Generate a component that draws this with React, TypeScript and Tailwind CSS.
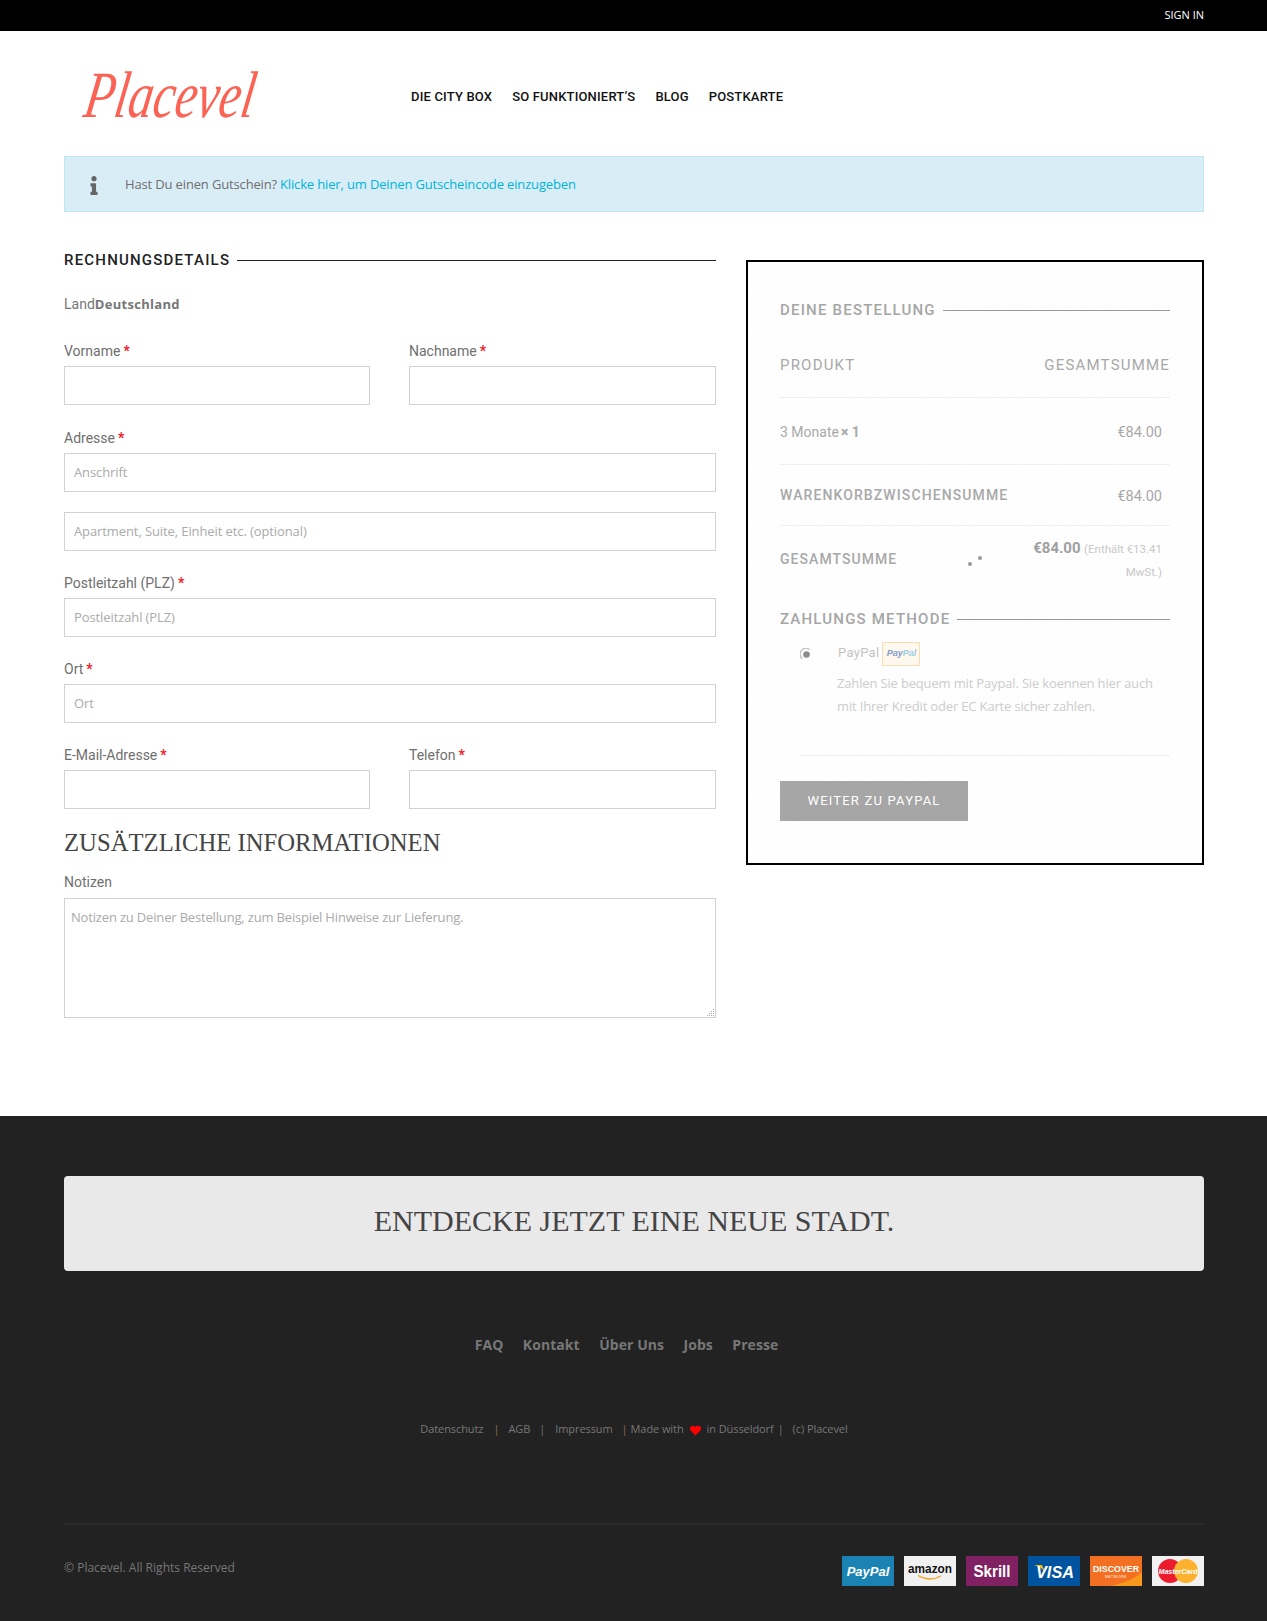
import React from "react";
import { FaInfo, FaHeart } from "react-icons/fa";

const Star = () => <span className="text-[#f0182a] font-bold ml-[3px]">*</span>;

function Label({ text, req = true, cls = "" }: { text: string; req?: boolean; cls?: string }) {
  return (
    <div className={`h-5 pt-px leading-5 text-[14px] text-[#6f6f6f] font-['Roboto',sans-serif] ${cls}`}>
      {text}
      {req && <Star />}
    </div>
  );
}

function Input({ ph = "", cls = "" }: { ph?: string; cls?: string }) {
  return (
    <input
      placeholder={ph}
      className={`block w-full h-[39px] border border-[#d2d2d2] bg-white px-[9px] pb-px text-[13px] tracking-[-0.1px] font-['Open_Sans',sans-serif] placeholder:text-[#aaa] outline-none ${cls}`}
    />
  );
}

function LineHeading({ text, dark = false, cls = "" }: { text: string; dark?: boolean; cls?: string }) {
  return (
    <div className={`flex items-center h-5 gap-[7px] ${cls}`}>
      <span
        className={`font-['Roboto',sans-serif] font-medium text-[15px] tracking-[1.2px] uppercase whitespace-nowrap ${dark ? "text-[#222]" : "text-[#a6a6a6]"}`}
      >
        {text}
      </span>
      <span className={`flex-1 h-px ${dark ? "bg-[#222]" : "bg-[#999]"}`} />
    </div>
  );
}

function Cards() {
  const base = "w-[52px] h-[30px] block";
  return (
    <div className="flex gap-[10px]">
      <svg viewBox="0 0 52 30" className={base}>
        <rect width="52" height="30" fill="#1a83b4" />
        <text x="26" y="20" textAnchor="middle" fontFamily="Liberation Sans" fontWeight="700" fontStyle="italic" fontSize="13" fill="#fff">PayPal</text>
      </svg>
      <svg viewBox="0 0 52 30" className={base}>
        <rect width="52" height="30" fill="#f1f1f1" />
        <text x="26" y="17" textAnchor="middle" fontFamily="Liberation Sans" fontWeight="700" fontSize="12" fill="#111" textLength="44" lengthAdjust="spacingAndGlyphs">amazon</text>
        <path d="M14 19.5c7 4.5 16 4.5 23 .5" fill="none" stroke="#f5a623" strokeWidth="1.4" />
      </svg>
      <svg viewBox="0 0 52 30" className={base}>
        <rect width="52" height="30" fill="#7f2163" />
        <text x="26" y="21" textAnchor="middle" fontFamily="Liberation Sans" fontWeight="700" fontSize="17" fill="#fff" textLength="37" lengthAdjust="spacingAndGlyphs">Skrill</text>
      </svg>
      <svg viewBox="0 0 52 30" className={base}>
        <rect width="52" height="30" fill="#00539f" />
        <path d="M6 9h8l3 7C14 12 10 10 6 9z" fill="#f7b600" />
        <text x="27" y="21.5" textAnchor="middle" fontFamily="Liberation Sans" fontWeight="700" fontStyle="italic" fontSize="17" fill="#fff" textLength="38" lengthAdjust="spacingAndGlyphs">VISA</text>
      </svg>
      <svg viewBox="0 0 52 30" className={base}>
        <rect width="52" height="30" fill="#f36f21" />
        <path d="M52 16C44 24 30 28 20 30h32z" fill="#f8981d" />
        <text x="26" y="16" textAnchor="middle" fontFamily="Liberation Sans" fontWeight="700" fontSize="9.5" fill="#fff" textLength="46" lengthAdjust="spacingAndGlyphs">DISCOVER</text>
        <text x="26" y="22" textAnchor="middle" fontFamily="Liberation Sans" fontSize="3.6" fill="#fff" letterSpacing="0.5">NETWORK</text>
      </svg>
      <svg viewBox="0 0 52 30" className={base}>
        <rect width="52" height="30" fill="#f1f1f1" />
        <circle cx="18" cy="15" r="12" fill="#ec1c2e" />
        <circle cx="34" cy="15" r="12" fill="#fdb22f" />
        <text x="26" y="18" textAnchor="middle" fontFamily="Liberation Sans" fontWeight="700" fontStyle="italic" fontSize="7.5" fill="#fff" textLength="39" lengthAdjust="spacingAndGlyphs">MasterCard</text>
      </svg>
    </div>
  );
}

export default function App() {
  return (
    <div className="w-[1267px] min-h-[1621px] bg-white font-['Open_Sans',sans-serif] overflow-hidden">
      <div className="h-[31px] bg-black flex items-center justify-end pr-[63px]">
        <a className="text-white text-[11px] uppercase font-['Open_Sans',sans-serif]">Sign in</a>
      </div>

      <div className="pl-[64px] pr-[63px]">
        <header className="h-[125px] flex items-start">
          <svg width="240" height="72" viewBox="0 0 240 72" className="block ml-[16px] mt-[30px] shrink-0">
            <g transform="skewX(-9) translate(10 0)">
              <text
                x="1"
                y="56"
                fontFamily="Liberation Serif"
                fontStyle="italic"
                fontSize="66"
                fill="#fb6455"
                textLength="170"
                lengthAdjust="spacingAndGlyphs"
              >
                Placevel
              </text>
            </g>
          </svg>
          <nav className="ml-[91px] mt-[56px] h-5 flex items-center gap-[20px] text-[13px] tracking-[0.17px] leading-5 font-medium text-[#111] uppercase font-['Roboto',sans-serif] whitespace-nowrap">
            <a>Die City Box</a>
            <a>So funktioniert’s</a>
            <a>Blog</a>
            <a>Postkarte</a>
          </nav>
        </header>

        <div className="h-[56px] bg-[#d9edf7] border border-[#bce8f1] flex items-center pl-[24px] text-[13px] tracking-[-0.15px]">
          <FaInfo className="text-[#666] w-[10px] h-[19px] mt-[2px]" />
          <span className="ml-[26px] mt-px text-[#6f6f6f]">Hast Du einen Gutschein?</span>
          <a className="ml-[3px] mt-px text-[#00b4d8]">Klicke hier, um Deinen Gutscheincode einzugeben</a>
        </div>

        <main className="flex items-start gap-[30px] mt-[36px] mb-[98px]">
          <section className="w-[652px]">
            <div className="h-6 flex items-center">
              <LineHeading text="Rechnungsdetails" dark cls="w-full" />
            </div>
            <div className="mt-[22px] h-5 leading-5 text-[14px] text-[#777] font-['Roboto',sans-serif]">
              Land<strong className="font-['Open_Sans',sans-serif] font-bold text-[13px] tracking-[0.3px]">Deutschland</strong>
            </div>

            <div className="mt-[26px] grid grid-cols-[306px_307px] gap-x-[39px]">
              <div>
                <Label text="Vorname" />
                <Input cls="mt-[6px]" />
              </div>
              <div>
                <Label text="Nachname" />
                <Input cls="mt-[6px]" />
              </div>
            </div>

            <Label text="Adresse" cls="mt-[22px]" />
            <Input ph="Anschrift" cls="mt-[6px]" />
            <Input ph="Apartment, Suite, Einheit etc. (optional)" cls="mt-[20px]" />

            <Label text="Postleitzahl (PLZ)" cls="mt-[21px]" />
            <Input ph="Postleitzahl (PLZ)" cls="mt-[6px]" />

            <Label text="Ort" cls="mt-[21px]" />
            <Input ph="Ort" cls="mt-[6px]" />

            <div className="mt-[21px] grid grid-cols-[306px_307px] gap-x-[39px]">
              <div>
                <Label text="E-Mail-Adresse" />
                <Input cls="mt-[6px]" />
              </div>
              <div>
                <Label text="Telefon" />
                <Input cls="mt-[6px]" />
              </div>
            </div>

            <h3 className="mt-[16px] h-[36px] leading-[36px] text-[24.7px] text-[#444] uppercase font-['Liberation_Serif',serif] font-normal whitespace-nowrap">
              Zusätzliche Informationen
            </h3>
            <Label text="Notizen" req={false} cls="mt-[10px]" />
            <div className="relative mt-[7px]">
              <textarea
                placeholder="Notizen zu Deiner Bestellung, zum Beispiel Hinweise zur Lieferung."
                className="block w-full h-[120px] resize-none border border-[#d2d2d2] bg-white px-[6px] py-[8px] text-[13px] tracking-[-0.17px] leading-5 placeholder:text-[#aaa] outline-none"
              />
              <svg width="9" height="9" viewBox="0 0 9 9" className="absolute right-[1px] bottom-[1px]">
                <g fill="#aaa">
                  <rect x="7" y="1" width="1" height="1" />
                  <rect x="7" y="3" width="1" height="1" />
                  <rect x="5" y="3" width="1" height="1" />
                  <rect x="7" y="5" width="1" height="1" />
                  <rect x="5" y="5" width="1" height="1" />
                  <rect x="3" y="5" width="1" height="1" />
                  <rect x="7" y="7" width="1" height="1" />
                  <rect x="5" y="7" width="1" height="1" />
                  <rect x="3" y="7" width="1" height="1" />
                  <rect x="1" y="7" width="1" height="1" />
                </g>
              </svg>
            </div>
          </section>

          <aside className="w-[458px] h-[605px] mt-[12px] border-2 border-black px-[32px] pt-[38px] font-['Roboto',sans-serif] text-[#a8a8a8] bg-[repeating-linear-gradient(135deg,#ffffff_0px,#ffffff_2px,#fdfdfd_2px,#fdfdfd_4px)]">
            <LineHeading text="Deine Bestellung" />

            <div className="h-[78px] pt-[13px] flex items-center justify-between border-b border-[#efefef] text-[15px] tracking-[1.2px] uppercase">
              <span>Produkt</span>
              <span>Gesamtsumme</span>
            </div>
            <div className="h-[67px] pt-[2px] flex items-center justify-between border-b border-[#efefef] text-[14px] pr-[8px]">
              <span>
                3 Monate<strong className="font-bold ml-[2px]">× 1</strong>
              </span>
              <span className="text-[14.5px] mt-px">€84.00</span>
            </div>
            <div className="h-[61px] flex items-center justify-between border-b border-[#efefef] text-[14px] pr-[8px]">
              <span className="font-medium tracking-[1.1px] uppercase">Warenkorbzwischensumme</span>
              <span className="text-[14.5px] mt-[3px]">€84.00</span>
            </div>
            <div className="relative h-[64px] flex items-center justify-between text-[14px] pr-[8px]">
              <span className="font-medium tracking-[1.05px] uppercase mt-[3px]">Gesamtsumme</span>
              <div className="w-[132px] text-right leading-[22px] mt-[4px]">
                <strong className="font-bold text-[15px] text-[#a0a0a0]">€84.00</strong>{" "}
                <span className="text-[11.5px] text-[#c8c8c8]">(Enthält €13.41 MwSt.)</span>
              </div>
              <span className="absolute left-[188px] top-[36px] w-[4px] h-[4px] rounded-full bg-[#999]" />
              <span className="absolute left-[198px] top-[30px] w-[4px] h-[4px] rounded-full bg-[#999]" />
            </div>

            <LineHeading text="Zahlungs Methode" cls="mt-[19px]" />

            <div className="mt-[13px] ml-[20px] h-6 flex items-center">
              <svg width="12" height="12" viewBox="0 0 12 12" className="block shrink-0">
                <path d="M2.2 10.6A5.4 5.4 0 0 1 9.6 1.7" fill="none" stroke="#c4c4c4" strokeWidth="1.4" />
                <circle cx="6.5" cy="6.5" r="3.3" fill="#8c8c8c" />
              </svg>
              <span className="ml-[26px] text-[13px] tracking-[0.3px] text-[#c4c4c4] font-['Roboto',sans-serif] -mt-[3px]">PayPal</span>
              <span className="ml-[3px] w-[38px] h-6 border border-[#fddcb0] bg-[#fff8ee] flex items-center justify-center text-[9px] italic font-bold font-['Liberation_Sans',sans-serif]">
                <span className="text-[#7f9cc9]">Pay</span>
                <span className="text-[#9fcde8]">Pal</span>
              </span>
            </div>

            <p className="mt-[6px] ml-[57px] text-[13px] tracking-[-0.16px] leading-[23px] text-[#cccccc] font-['Open_Sans',sans-serif]">
              Zahlen Sie bequem mit Paypal. Sie koennen hier auch mit Ihrer Kredit oder EC Karte sicher zahlen.
            </p>

            <div className="mt-[37px] ml-[20px] h-px bg-[#efefef]" />

            <button className="block mt-[25px] w-[188px] h-[40px] bg-[#a6a6a6] text-white text-[13px] tracking-[1.2px] uppercase font-['Roboto',sans-serif]">
              Weiter zu PayPal
            </button>
          </aside>
        </main>
      </div>

      <footer className="bg-[#222] h-[505px] pl-[64px] pr-[63px] pt-[60px]">
        <div className="h-[95px] rounded-[4px] bg-[#e9e9e9] flex items-start justify-center pt-[27px] text-[30px] leading-[36px] text-[#444] font-['Liberation_Serif',serif] uppercase">
          Entdecke jetzt eine neue Stadt.
        </div>

        <div className="mt-[64px] h-5 flex justify-center gap-[19.5px] pr-[15px] text-[14px] tracking-[0.05px] leading-5 font-bold text-[#777]">
          <a>FAQ</a>
          <a>Kontakt</a>
          <a>Über Uns</a>
          <a>Jobs</a>
          <a>Presse</a>
        </div>

        <div className="mt-[64px] h-5 flex items-center justify-center text-[11px] tracking-[-0.08px] text-[#777] whitespace-nowrap">
          <a>Datenschutz</a>
          <span className="ml-[10px] text-[#8a6a50]">|</span>
          <a className="ml-[9px]">AGB</a>
          <span className="ml-[9px] text-[#777]">|</span>
          <a className="ml-[10px]">Impressum</a>
          <span className="ml-[9px] text-[#8a6a50]">|</span>
          <span className="ml-[3px]">Made with</span>
          <FaHeart className="ml-[6px] w-[11px] h-[11px] text-[#f00] mt-[2px]" />
          <span className="ml-[6px]">in Düsseldorf</span>
          <span className="ml-[4px]">|</span>
          <span className="ml-[9px]">(c) Placevel</span>
        </div>

        <div className="mt-[84px] h-[2px] bg-[#2a2a2a]" />

        <div className="mt-[31px] flex items-center justify-between">
          <span className="text-[12px] tracking-[0.02px] text-[#777] -mt-[6px]">© Placevel. All Rights Reserved</span>
          <Cards />
        </div>
      </footer>
    </div>
  );
}
